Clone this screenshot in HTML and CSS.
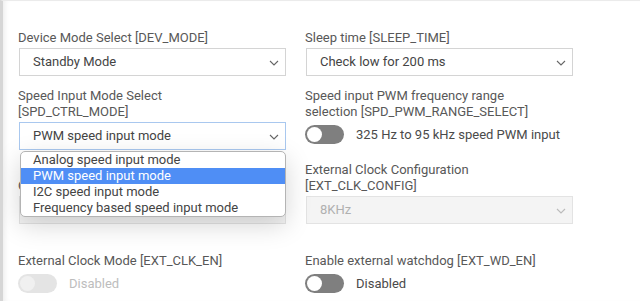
FILE: index.html
```html
<!DOCTYPE html>
<html>
<head>
    <link rel="stylesheet" href="styles.css">
</head>
<body>
    <div class="panel">
        <div class="grid">
            <div class="field">
                <label class="field-label">Device Mode Select [DEV_MODE]</label>
                <div class="select">
                    <span>Standby Mode</span>
                    <svg class="chevron" width="10" height="6" viewBox="0 0 10 6"><path d="M1 1l4 4 4-4" fill="none" stroke="#666" stroke-width="1.1"/></svg>
                </div>
            </div>
            <div class="field">
                <label class="field-label">Sleep time [SLEEP_TIME]</label>
                <div class="select">
                    <span>Check low for 200 ms</span>
                    <svg class="chevron" width="10" height="6" viewBox="0 0 10 6"><path d="M1 1l4 4 4-4" fill="none" stroke="#666" stroke-width="1.1"/></svg>
                </div>
            </div>

            <div class="field">
                <label class="field-label">Speed Input Mode Select<br>[SPD_CTRL_MODE]</label>
                <div class="select focused">
                    <span>PWM speed input mode</span>
                    <svg class="chevron" width="10" height="6" viewBox="0 0 10 6"><path d="M1 1l4 4 4-4" fill="none" stroke="#666" stroke-width="1.1"/></svg>
                    <ul class="options">
                        <li>Analog speed input mode</li>
                        <li class="selected">PWM speed input mode</li>
                        <li>I2C speed input mode</li>
                        <li>Frequency based speed input mode</li>
                    </ul>
                </div>
            </div>
            <div class="field">
                <label class="field-label">Speed input PWM frequency range<br>selection [SPD_PWM_RANGE_SELECT]</label>
                <div class="switch-row">
                    <span class="switch"></span>
                    <span class="switch-text">325 Hz to 95 kHz speed PWM input</span>
                </div>
            </div>

            <div class="field">
                <label class="field-label">Clock Source Select [CLK_SRC]</label>
                <div class="select disabled">
                    <span>Internal Oscillator</span>
                    <svg class="chevron" width="10" height="6" viewBox="0 0 10 6"><path d="M1 1l4 4 4-4" fill="none" stroke="#bbb" stroke-width="1.1"/></svg>
                </div>
            </div>
            <div class="field">
                <label class="field-label">External Clock Configuration<br>[EXT_CLK_CONFIG]</label>
                <div class="select disabled">
                    <span>8KHz</span>
                    <svg class="chevron" width="10" height="6" viewBox="0 0 10 6"><path d="M1 1l4 4 4-4" fill="none" stroke="#bbb" stroke-width="1.1"/></svg>
                </div>
            </div>

            <div class="field last">
                <label class="field-label">External Clock Mode [EXT_CLK_EN]</label>
                <div class="switch-row">
                    <span class="switch off"></span>
                    <span class="switch-text muted">Disabled</span>
                </div>
            </div>
            <div class="field last">
                <label class="field-label">Enable external watchdog [EXT_WD_EN]</label>
                <div class="switch-row">
                    <span class="switch"></span>
                    <span class="switch-text">Disabled</span>
                </div>
            </div>
        </div>
    </div>
</body>
</html>
```

FILE: styles.css
```css
body {
    margin: 0;
    background: #fff;
    font-family: Roboto, "Liberation Sans", sans-serif;
    font-size: 13px;
    line-height: 16px;
    color: #555;
}

.panel {
    height: 301px;
    box-sizing: border-box;
    border-top: 1px solid #ebebeb;
    border-left: 3px solid #d6d6d6;
    box-shadow: inset 5px 0 5px -3px rgba(0, 0, 0, 0.07);
    padding: 29px 0 0 16px;
    overflow: hidden;
}

.grid {
    display: grid;
    grid-template-columns: 267px 267px;
    column-gap: 20px;
    row-gap: 12px;
}

.field {
    display: flex;
    flex-direction: column;
    justify-content: flex-end;
}

.field.last {
    margin-top: 17px;
}

.field-label {
    margin-left: -1px;
    margin-bottom: 2px;
    color: #585858;
}

.select {
    position: relative;
    height: 28px;
    box-sizing: border-box;
    border: 1px solid #d4d4d4;
    background: #fff;
    display: flex;
    align-items: center;
    padding-left: 13px;
    color: #444;
}

.select.focused {
    border-color: #a9c8ef;
}

.select.disabled {
    background: #f4f4f4;
    border-color: #e3e3e3;
    color: #b0b0b0;
}

.chevron {
    position: absolute;
    right: 6px;
    top: 11px;
}

.options {
    position: absolute;
    top: 28px;
    left: 0;
    width: 266px;
    box-sizing: border-box;
    margin: 0;
    padding: 0;
    list-style: none;
    background: #fff;
    border: 1px solid #b4b4b4;
    border-radius: 5px;
    box-shadow: 0 8px 26px rgba(0, 0, 0, 0.17);
    overflow: hidden;
    z-index: 2;
}

.options li {
    height: 16px;
    line-height: 16px;
    padding-left: 12px;
    color: #444;
}

.options li.selected {
    background: #4f8ef5;
    color: #fff;
}

.switch-row {
    display: flex;
    align-items: flex-start;
    box-sizing: border-box;
    height: 28px;
    padding-top: 3px;
    margin-left: -1px;
}

.switch {
    position: relative;
    width: 39px;
    height: 19px;
    border-radius: 10px;
    background: #7f7f7f;
    margin-right: 12px;
}

.switch::after {
    content: "";
    position: absolute;
    left: 2px;
    top: 2px;
    width: 15px;
    height: 15px;
    border-radius: 50%;
    background: #fff;
}

.switch.off {
    background: #e4e4e4;
}

.switch.off::after {
    background: #f0f0f0;
}

.switch-text {
    line-height: 19px;
    color: #4a4a4a;
}

.switch-text.muted {
    color: #bdbdbd;
}
```
